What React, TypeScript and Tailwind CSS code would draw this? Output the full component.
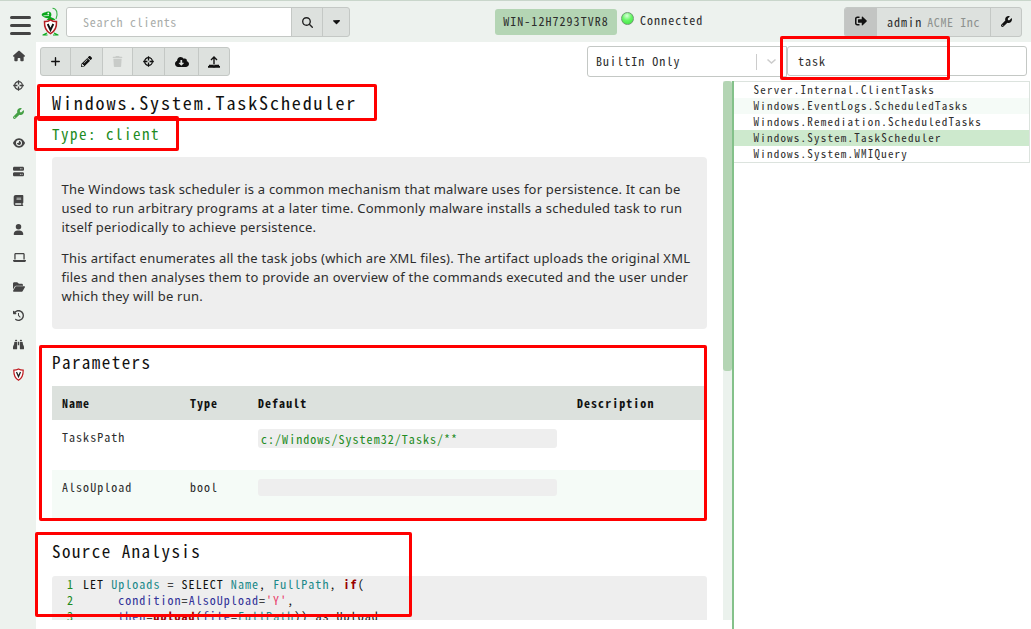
import React from 'react';
import {
  FaHouse, FaWrench, FaEye, FaServer, FaBook, FaUser, FaLaptop, FaFolderOpen,
  FaClockRotateLeft, FaBinoculars, FaPlus, FaTrash, FaMagnifyingGlass, FaCaretDown,
} from 'react-icons/fa6';
import { FaPencilAlt, FaCloudDownloadAlt, FaSignOutAlt } from 'react-icons/fa';

const Target = ({ size }: { size: number }) => (
  <svg width={size} height={size} viewBox="0 0 12 12" fill="none" stroke="currentColor" strokeWidth="1.400">
    <circle cx="6" cy="6" r="4.200" />
    <path d="M6 .2V4.800M6 7.200V11.800M.2 6H4.800M7.200 6H11.800" />
  </svg>
);

const UploadTray = ({ size }: { size: number }) => (
  <svg width={size} height={size} viewBox="0 0 12 12" fill="none" stroke="currentColor">
    <path d="M6 8.500V1.200M3 3.900L6 1 9 3.900" strokeWidth="1.400" />
    <path d="M.9 9.800H4.500Q6 10.900 7.500 9.800H11.100" strokeWidth="2.200" />
    <path d="M0 10.800H12" strokeWidth="1.800" />
  </svg>
);

const Logo = () => (
  <svg width="19" height="29" viewBox="0 0 19 29" fill="none">
    <path d="M11.500 1.200C15.800 1.500 17.300 6 15 12" stroke="#3cb44a" strokeWidth="1.100" />
    <path d="M.6 8C.8 6 3 5.200 4.600 5.200 6 4.200 9 4.300 10 6 10.700 7.500 10.400 9 9.500 10L13 11.500 14.500 13H5.500L7.500 11.200C5 11.400 1.500 10.200 .6 8Z" fill="#0aa81c" />
    <path d="M2.500 8.800L8 8.500" stroke="#e9f5ea" strokeWidth=".8" />
    <circle cx="7.300" cy="6.500" r=".9" fill="#fff" />
    <path d="M9.500 12.800C11.500 14.200 13.500 14.700 15.500 14.500 15.800 20 14 24.300 9.500 26.600 5 24.300 3.200 20 3.500 14.500 5.500 14.700 7.500 14.200 9.500 12.800Z" fill="#fff" stroke="#b51f24" strokeWidth="1.500" />
    <path d="M6.700 17L9.500 23 12.300 17" stroke="#111" strokeWidth="1.900" />
    <path d="M2 28L6 26M17 28L13 26M1.500 28H6.500M12 28H17.500" stroke="#0aa81c" strokeWidth="1.200" />
  </svg>
);

const Shield = () => (
  <svg width="11" height="13" viewBox="0 0 11 13" fill="none">
    <path d="M5.500 1C7 1.900 8.600 2.200 10.200 2.200 10.300 7 9 10.300 5.500 12.200 2 10.300.7 7 .8 2.200 2.400 2.200 4 1.900 5.500 1Z" fill="#fff" stroke="#c01b20" strokeWidth="1.200" />
    <path d="M3.500 4L5.500 8.600 7.500 4" stroke="#222" strokeWidth="1.300" />
  </svg>
);

const nav = [
  { Icon: FaHouse, size: 12 },
  { Icon: Target, size: 11 },
  { Icon: FaWrench, size: 11, active: true },
  { Icon: FaEye, size: 12 },
  { Icon: FaServer, size: 11 },
  { Icon: FaBook, size: 11 },
  { Icon: FaUser, size: 11 },
  { Icon: FaLaptop, size: 13 },
  { Icon: FaFolderOpen, size: 12 },
  { Icon: FaClockRotateLeft, size: 11 },
  { Icon: FaBinoculars, size: 11 },
];

const tools = [
  { Icon: FaPlus, cell: 'w-[30px]', size: 11 },
  { Icon: FaPencilAlt, cell: 'w-[32px]', size: 11 },
  { Icon: FaTrash, cell: 'w-[30px]', size: 11, off: true },
  { Icon: Target, cell: 'w-[32px]', size: 11 },
  { Icon: FaCloudDownloadAlt, cell: 'w-[34px]', size: 14 },
  { Icon: UploadTray, cell: 'w-[30px]', size: 12 },
];

const artifacts = [
  'Server.Internal.ClientTasks',
  'Windows.EventLogs.ScheduledTasks',
  'Windows.Remediation.ScheduledTasks',
  'Windows.System.TaskScheduler',
  'Windows.System.WMIQuery',
];

const Header = () => (
  <header className="flex h-[42px] shrink-0 items-start border-t border-[#c9d6cb] bg-[#edf2ee] pl-[10px] pr-[9px] pt-[6px]">
    <div className="mt-[9px] flex w-[21px] flex-col gap-[5px]">
      <i className="h-[3px] rounded bg-[#444]" />
      <i className="h-[3px] rounded bg-[#444]" />
      <i className="h-[3px] rounded bg-[#444]" />
    </div>
    <div className="ml-[10px]"><Logo /></div>
    <div className="ml-[6px] flex h-[30px] w-[284px] overflow-hidden rounded-[3px] border border-[#c4c8c5] bg-[#dde1de]">
      <div className="flex w-[225px] shrink-0 items-center border-r border-[#c4c8c5] bg-white pl-[16px] text-[#a9adaa] tracking-[0.720px]">Search clients</div>
      <div className="flex w-[31px] shrink-0 items-center justify-center border-r border-[#c4c8c5] text-[#222]"><FaMagnifyingGlass size={11} /></div>
      <div className="flex flex-1 items-center justify-center pb-[1px] text-[#111]"><FaCaretDown size={11} /></div>
    </div>
    <div className="ml-[145px] mt-[2px] flex h-[26px] w-[122px] items-center justify-center rounded-[3px] bg-[#b4d5b4] pb-[2px]">WIN-12H7293TVR8</div>
    <div className="ml-[4px] mt-[5px] h-[13px] w-[13px] rounded-full border border-[#6f9b73] bg-[radial-gradient(circle_at_45%_25%,#d9ffd9_0%,#66f766_45%,#3be03b_100%)]" />
    <div className="ml-[6px] mt-[4px] leading-[18px]">Connected</div>
    <div className="ml-auto flex h-[30px] w-[178px] shrink-0 overflow-hidden rounded-[3px] border border-[#c4c8c5] bg-[#dde1de]">
      <div className="flex w-[32px] items-center justify-center bg-[#c3c5c3] pb-[2px] text-[#111]"><FaSignOutAlt size={12} /></div>
      <div className="flex w-[114px] items-center whitespace-pre border-r border-[#c4c8c5] pl-[10px]">admin<span className="pl-[5px] text-[#8e928f] tracking-[0.600px]">ACME Inc</span></div>
      <div className="flex flex-1 items-center justify-center pb-[1px] text-[#111]"><FaWrench size={11} /></div>
    </div>
  </header>
);

const Sidebar = () => (
  <nav className="flex w-[36px] shrink-0 flex-col bg-[#edf2ee] pl-[13px] text-[#444]">
    {nav.map(({ Icon, size, active }, i) => (
      <div key={i} className={`flex h-[28.800px] items-center ${active ? 'text-[#45a045]' : ''}`}><Icon size={size} /></div>
    ))}
    <div className="flex h-[31px] items-center"><Shield /></div>
  </nav>
);

const Details = () => (
  <div className="flex min-h-0 flex-1 flex-col overflow-hidden pl-[16px]">
    <h2 className="mt-[9px] h-[27px] text-[18px] leading-[24px] tracking-[1.900px] text-[#111]">Windows.System.TaskScheduler</h2>
    <h3 className="mt-[5px] h-[24px] text-[15px] leading-[24px] tracking-[1.500px] text-[#228b22]">Type: client</h3>
    <div className="mt-[11px] h-[172px] w-[655px] shrink-0 rounded-[4px] bg-[#eee] pl-[9.500px] pt-[23px] font-['Noto_Sans',sans-serif] text-[13px] leading-[19px] tracking-[0.220px]">
      <p className="whitespace-nowrap">The Windows task scheduler is a common mechanism that malware uses for persistence. It can be<br />used to run arbitrary programs at a later time. Commonly malware installs a scheduled task to run<br />itself periodically to achieve persistence.</p>
      <p className="mt-[12px] whitespace-nowrap">This artifact enumerates all the task jobs (which are XML files). The artifact uploads the original XML<br />files and then analyses them to provide an overview of the commands executed and the user under<br />which they will be run.</p>
    </div>
    <h3 className="mt-[21px] h-[25px] shrink-0 text-[17px] leading-[24px] tracking-[1.450px] text-[#111]">Parameters</h3>
    <div className="mt-[11px] w-[655px] shrink-0">
      <div className="grid h-[34px] grid-cols-[128px_68px_319px_1fr] items-center bg-[#dce1dd] pl-[10px] font-bold text-[#111]">
        <span>Name</span><span>Type</span><span>Default</span><span>Description</span>
      </div>
      <div className="grid h-[50px] grid-cols-[128px_68px_319px_1fr] items-start bg-white pl-[10px] pt-[9px] leading-[16px]">
        <span>TasksPath</span><span /><code className="h-[19px] w-[299px] rounded-[3px] bg-[#eee] pl-[3px] font-[inherit] leading-[19px] text-[#228b22]">c:/Windows/System32/Tasks/**</code>
      </div>
      <div className="grid h-[50px] grid-cols-[128px_68px_319px_1fr] items-start bg-[#f5fbf7] pl-[10px] pt-[9px] leading-[16px]">
        <span>AlsoUpload</span><span>bool</span><code className="h-[17px] w-[299px] rounded-[3px] bg-[#eee]" />
      </div>
    </div>
    <h3 className="mt-[19px] h-[25px] shrink-0 text-[17px] leading-[24px] tracking-[1.450px] text-[#111]">Source Analysis</h3>
    <div className="mt-[12px] grid h-[44px] w-[655px] shrink-0 grid-cols-[31px_1fr] overflow-hidden rounded-t-[3px] bg-[#eee] leading-[16px] text-[#111]">
      <div className="pr-[9px] text-right text-[#228b22]">1<br />2<br />3</div>
      <pre className="font-[inherit]">
        <div>LET <span className="text-[#1b8989]">Uploads</span> = SELECT <span className="text-[#1b8989]">Name</span>, <span className="text-[#1b8989]">FullPath</span>, <b className="text-[#900]">if</b>(</div>
        <div>     <span className="text-[#333399]">condition</span>=<span className="text-[#333399]">AlsoUpload</span>=<span className="text-[#e83e6c]">'Y'</span>,</div>
        <div>     <span className="text-[#333399]">then</span>=<b className="text-[#900]">upload</b>(<span className="text-[#333399]">file</span>=<span className="text-[#1b8989]">FullPath</span>)) as Upload</div>
      </pre>
    </div>
  </div>
);

const Mark = ({ className }: { className: string }) => (
  <div className={`pointer-events-none absolute rounded-[2px] border-[3px] border-[#ff0000] ${className}`} />
);

export default function App() {
  return (
    <div className="relative flex h-[629px] w-[1031px] flex-col overflow-hidden bg-white font-['Noto_Sans_Mono_CJK_SC','Liberation_Mono',monospace] text-[12px] tracking-[1.040px] text-[#2d2d2d]">
      <Header />
      <div className="flex min-h-0 flex-1">
        <Sidebar />
        <main className="flex min-w-0 flex-1 flex-col">
          <div className="flex h-[39px] shrink-0 items-start pl-[4px] pr-[4px]">
            <div className="mt-[5px] flex h-[29px] w-[190px] overflow-hidden rounded-[3px] border border-[#c4c8c5] bg-[#dde1de] text-[#111]">
              {tools.map(({ Icon, cell, size, off }, i) => (
                <div key={i} className={`flex shrink-0 items-center justify-center ${cell} ${i < 5 ? 'border-r border-[#c4c8c5]' : ''} ${off ? 'bg-[#e6e9e6] text-[#c8cbc8]' : ''}`}><Icon size={size} /></div>
              ))}
            </div>
            <div className="ml-auto mt-[4px] flex h-[31px] w-[200px] items-center rounded-l-[3px] border border-[#c4c8c5] pl-[8px]">
              <span className="pb-[2px]">BuiltIn Only</span>
              <div className="ml-auto h-[16px] w-px bg-[#ccc]" />
              <svg className="mx-[9px]" width="11" height="7" viewBox="0 0 11 7" fill="none"><path d="M1.500 1.500l4 3.500 4-3.500" stroke="#ccc" strokeWidth="1.600" /></svg>
            </div>
            <div className="mt-[4px] flex h-[30px] w-[240px] items-center rounded-[3px] border border-[#c4c8c5] pl-[10px]">task</div>
          </div>
          <div className="flex min-h-0 flex-1">
            <div className="flex w-[687px] shrink-0 flex-col pb-[9px]"><Details /></div>
            <div className="mb-[9px] w-[9px] shrink-0 bg-[#ebf2ed]"><div className="h-[290px] rounded-[3px] bg-[#b4d5b4]" /></div>
            <div className="w-[2px] shrink-0 bg-[#84c18a]" />
            <div className="min-w-0 flex-1 text-[11px] leading-[14px] tracking-[1.220px]">
              <div className="mr-[1px] border-y border-r border-[#dce3de]">
                {artifacts.map((a, i) => (
                  <div key={a} className={`h-[16px] pl-[19.500px] ${i === 3 ? 'bg-[#cde9cd]' : i === 1 ? 'bg-[#f5fbf7]' : ''}`}>{a}</div>
                ))}
              </div>
            </div>
          </div>
        </main>
      </div>
      <Mark className="left-[37px] top-[84px] h-[37px] w-[340px]" />
      <Mark className="left-[34px] top-[116px] h-[35px] w-[145px]" />
      <Mark className="left-[39px] top-[345px] h-[176px] w-[668px]" />
      <Mark className="left-[35px] top-[532px] h-[85px] w-[377px]" />
      <Mark className="left-[780px] top-[36px] h-[44px] w-[170px]" />
    </div>
  );
}
